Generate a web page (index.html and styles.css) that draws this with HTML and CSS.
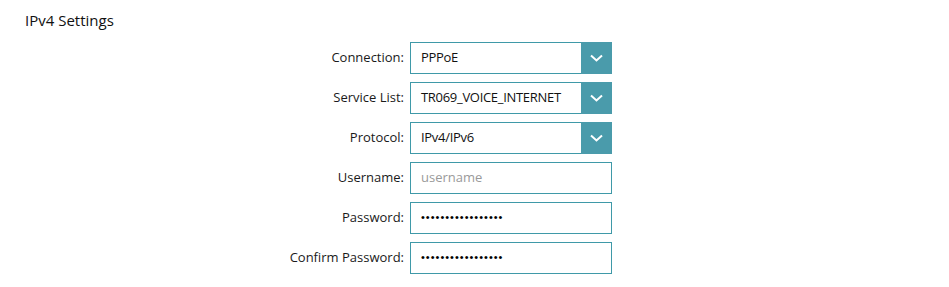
FILE: index.html
```html
<!DOCTYPE html>
<html lang="en">
<head>
<meta charset="utf-8">
<title>IPv4 Settings</title>
<link rel="stylesheet" href="styles.css">
</head>
<body>
<section class="panel">
  <h2 class="panel-title">IPv4 Settings</h2>
  <form class="form">
    <label class="form-label">Connection:</label>
    <div class="select">
      <span class="select-value">PPPoE</span>
      <span class="select-btn"><svg width="13" height="8" viewBox="0 0 13 8"><path d="M1 1.5 L6.5 6.5 L12 1.5" fill="none" stroke="#fff" stroke-width="2"/></svg></span>
    </div>

    <label class="form-label">Service List:</label>
    <div class="select">
      <span class="select-value">TR069_VOICE_INTERNET</span>
      <span class="select-btn"><svg width="13" height="8" viewBox="0 0 13 8"><path d="M1 1.5 L6.5 6.5 L12 1.5" fill="none" stroke="#fff" stroke-width="2"/></svg></span>
    </div>

    <label class="form-label">Protocol:</label>
    <div class="select">
      <span class="select-value">IPv4/IPv6</span>
      <span class="select-btn"><svg width="13" height="8" viewBox="0 0 13 8"><path d="M1 1.5 L6.5 6.5 L12 1.5" fill="none" stroke="#fff" stroke-width="2"/></svg></span>
    </div>

    <label class="form-label">Username:</label>
    <div class="field"><span class="placeholder">username</span></div>

    <label class="form-label">Password:</label>
    <div class="field"><span class="dots">•••••••••••••••••</span></div>

    <label class="form-label">Confirm Password:</label>
    <div class="field"><span class="dots">•••••••••••••••••</span></div>
  </form>
</section>
</body>
</html>
```

FILE: styles.css
```css
html, body {
  margin: 0;
  background: #fff;
}
body {
  font-family: "Open Sans", "Liberation Sans", sans-serif;
  color: #1f1f1f;
}
.panel {
  padding: 10px 0 0 25px;
}
.panel-title {
  margin: 0;
  font-size: 15px;
  font-weight: 400;
  line-height: 20px;
  color: #111;
}
.form {
  margin-top: 12px;
  display: grid;
  grid-template-columns: 379px 202px;
  grid-auto-rows: 32px;
  column-gap: 6px;
  row-gap: 8px;
}
.form-label {
  display: flex;
  align-items: center;
  justify-content: flex-end;
  padding-bottom: 2px;
  font-size: 13px;
  color: #1a1a1a;
}
.select, .field {
  box-sizing: border-box;
  display: flex;
  align-items: center;
  border: 1px solid #3f99a8;
  background: #fff;
}
.select-value {
  flex: 1;
  padding: 0 0 2px 10px;
  font-size: 13px;
  letter-spacing: -0.3px;
  white-space: nowrap;
  overflow: hidden;
  color: #111;
}
.select-btn {
  align-self: stretch;
  width: 31px;
  margin: -1px -1px -1px 0;
  background: #4a9bab;
  display: flex;
  align-items: center;
  justify-content: center;
}
.field {
  padding: 0 0 2px 10px;
}
.placeholder {
  font-size: 13px;
  color: #9a9a9a;
}
.dots {
  font-family: "Liberation Sans", sans-serif;
  font-size: 11px;
  letter-spacing: 1px;
  color: #000;
}
```
